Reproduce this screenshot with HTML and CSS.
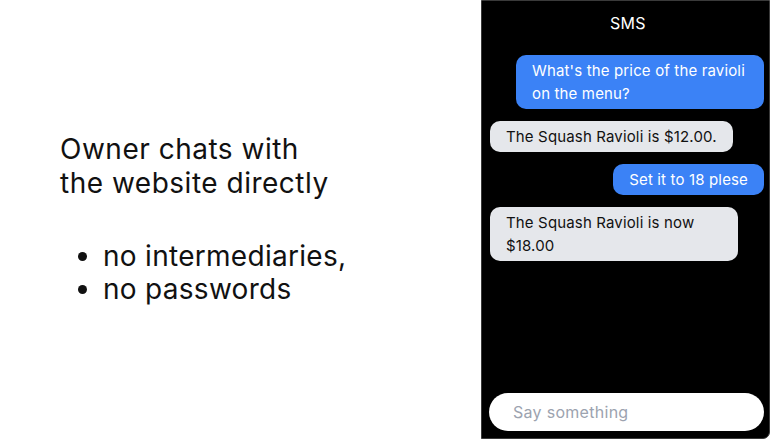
FILE: index.html
```html
<!DOCTYPE html>
<html>
<head>
<meta charset="utf-8">
<link rel="stylesheet" href="styles.css">
</head>
<body>
<div class="slide">
  <section class="pitch">
    <h1 class="headline">Owner chats with<br>the website directly</h1>
    <ul class="points">
      <li>no intermediaries,</li>
      <li>no passwords</li>
    </ul>
  </section>
  <section class="phone">
    <header class="phone-title">SMS</header>
    <div class="thread">
      <div class="bubble out">What's the price of the ravioli on the menu?</div>
      <div class="bubble in">The Squash Ravioli is $12.00.</div>
      <div class="bubble out">Set it to 18 plese</div>
      <div class="bubble in">The Squash Ravioli is now $18.00</div>
    </div>
    <div class="composer">
      <input class="composer-input" type="text" placeholder="Say something">
    </div>
  </section>
</div>
</body>
</html>
```
FILE: styles.css
```css
* { box-sizing: border-box; }
html, body { margin: 0; padding: 0; background: #fff; }
body { font-family: Inter, "Noto Sans", sans-serif; letter-spacing: 0.018em; }
.slide {
  width: 770px;
  height: 439px;
  display: flex;
  overflow: hidden;
}
.pitch {
  width: 481px;
  flex: none;
  display: flex;
  flex-direction: column;
  justify-content: center;
  padding-left: 60px;
  color: #111;
}
.headline {
  margin: 0 0 40px 0;
  font-size: 28px;
  font-weight: 400;
  line-height: 33.6px;
  letter-spacing: 0.018em;
}
.points {
  margin: 0;
  padding-left: 43px;
  font-size: 28px;
  line-height: 33px;
}
.phone {
  width: 289px;
  height: 439px;
  flex: none;
  background: #000;
  border: 1px solid #3a3a3a;
  border-radius: 0 0 7px 0;
  display: flex;
  flex-direction: column;
  padding: 10px 5px 6px 7px;
}
.phone-title {
  color: #fff;
  text-align: center;
  font-size: 16px;
  line-height: 24px;
  padding-left: 3px;
}
.thread {
  flex: 1;
  display: flex;
  flex-direction: column;
  gap: 12px;
  padding: 20px 0 0 1px;
}
.bubble {
  max-width: 248px;
  padding: 4px 16px;
  font-size: 15px;
  line-height: 23px;
  letter-spacing: 0.01em;
  border-radius: 10px;
}
.bubble.out {
  align-self: flex-end;
  background: #3b82f6;
  color: #fff;
}
.bubble.in {
  align-self: flex-start;
  background: #e5e7eb;
  color: #111;
}
.composer { display: flex; padding-bottom: 1px; }
.composer-input {
  width: 100%;
  height: 38px;
  border: none;
  outline: none;
  border-radius: 19px;
  background: #fff;
  padding: 0 24px;
  font-family: Inter, "Noto Sans", sans-serif;
  font-size: 16px;
  letter-spacing: 0.018em;
  color: #111;
}
.composer-input::placeholder { color: #9ca3af; }
```
